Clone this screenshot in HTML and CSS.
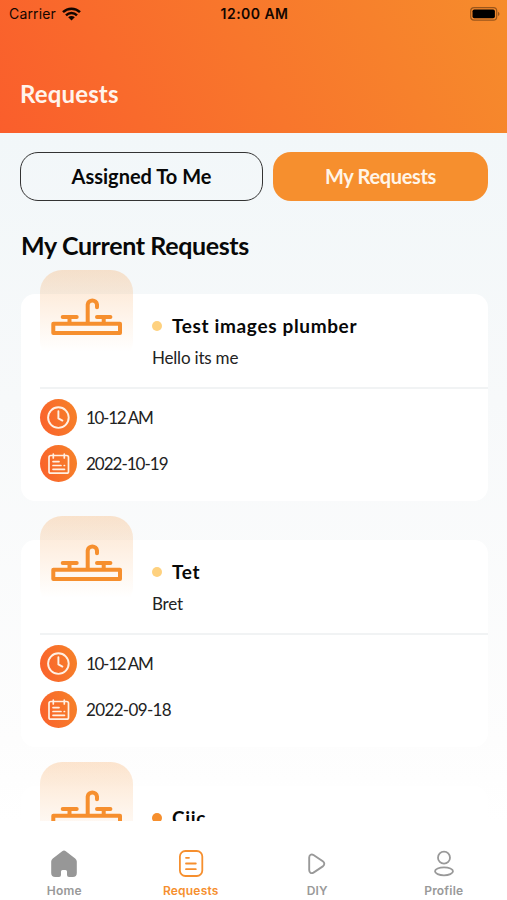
FILE: index.html
```html
<!DOCTYPE html>
<html lang="en">
	<head>
		<meta charset="UTF-8" />
		<meta name="viewport" content="width=device-width, initial-scale=1.0" />
		<title>Requests</title>
		<link rel="stylesheet" href="styles.css">
	</head>
	<body>
		<svg class="sprite" aria-hidden="true">
			<symbol id="sink" viewBox="0 0 93 93">
				<g fill="none" stroke="#f68f2e" stroke-width="4" stroke-linecap="round" stroke-linejoin="round">
					<rect x="13.3" y="53.7" width="66.7" height="9.4" />
					<path d="M47.7 53V34.5a4.7 4.7 0 0 1 9.3 0V37.2" />
					<path d="M22.7 47h14M29.5 47v6M57 47h13.4M63.7 47v6" />
				</g>
			</symbol>
			<symbol id="clock" viewBox="0 0 37 37">
				<g fill="none" stroke="#fff0e4" stroke-width="1.9" stroke-linecap="round" stroke-linejoin="round">
					<circle cx="18.4" cy="18.6" r="10.3" />
					<path d="M18.4 12.2v7.2l4 2.2" />
				</g>
			</symbol>
			<symbol id="calendar" viewBox="0 0 37 37">
				<g fill="none" stroke="#fff0e4" stroke-width="1.7" stroke-linecap="round" stroke-linejoin="round">
					<rect x="9" y="10.500" width="19.5" height="17.7" rx="1.8" />
					<path d="M13.3 9v4M24.3 9v4M13 16.6h6M13 20.5h8M24.2 20.5h.3M13 24.3h11.5" />
				</g>
			</symbol>
		</svg>

		<div class="screen">
			<header class="header">
				<div class="status">
					<div class="carrier">
						<span>Carrier</span>
						<svg width="19" height="14" viewBox="0 0 19 14">
							<g fill="none" stroke="#130600" stroke-width="2.5">
								<path d="M1 5.2a12.2 12.2 0 0 1 17 0" />
								<path d="M4 8.3a7.9 7.9 0 0 1 11 0" />
							</g>
							<path d="M9.5 13.6L6.2 10.3a4.7 4.7 0 0 1 6.6 0z" fill="#130600" />
						</svg>
					</div>
					<span class="time">12:00 AM</span>
					<svg class="battery" width="30" height="14" viewBox="0 0 30 14">
						<rect x="0.7" y="0.7" width="26" height="12.4" rx="3.4" fill="none" stroke="#9a561b" stroke-width="1.2" />
						<rect x="2.5" y="2.5" width="22.4" height="8.8" rx="1.8" fill="#000" />
						<path d="M28 4.7c2 .8 2 3.6 0 4.4z" fill="#9a561b" />
					</svg>
				</div>
				<h1 class="title">Requests</h1>
			</header>

			<main class="content">
				<div class="switch">
					<button class="switch-btn assigned">Assigned To Me</button>
					<button class="switch-btn mine">My Requests</button>
				</div>
				<h2 class="section-title">My Current Requests</h2>

				<section class="list">
					<article class="card">
						<div class="card-head">
							<div class="tile"><svg width="93" height="93"><use href="#sink" /></svg></div>
							<div class="info">
								<h3 class="name"><i class="dot"></i><span>Test images plumber</span></h3>
								<p class="desc">Hello its me</p>
							</div>
						</div>
						<div class="meta">
							<div class="row"><svg class="badge" viewBox="0 0 37 37"><use href="#clock" /></svg><span class="hours">10-12 AM</span></div>
							<div class="row"><svg class="badge" viewBox="0 0 37 37"><use href="#calendar" /></svg><span class="date">2022-10-19</span></div>
						</div>
					</article>

					<article class="card">
						<div class="card-head">
							<div class="tile"><svg width="93" height="93"><use href="#sink" /></svg></div>
							<div class="info">
								<h3 class="name"><i class="dot"></i><span>Tet</span></h3>
								<p class="desc">Bret</p>
							</div>
						</div>
						<div class="meta">
							<div class="row"><svg class="badge" viewBox="0 0 37 37"><use href="#clock" /></svg><span class="hours">10-12 AM</span></div>
							<div class="row"><svg class="badge" viewBox="0 0 37 37"><use href="#calendar" /></svg><span class="date wide">2022-09-18</span></div>
						</div>
					</article>

					<article class="card">
						<div class="card-head">
							<div class="tile"><svg width="93" height="93"><use href="#sink" /></svg></div>
							<div class="info">
								<h3 class="name"><i class="dot active"></i><span>Ciic</span></h3>
							</div>
						</div>
					</article>
				</section>
			</main>

			<nav class="tabs">
				<a class="tab">
					<svg width="28" height="28" viewBox="0 0 28 28">
						<path d="M12.2 1.2a3 3 0 0 1 3.6 0l9.4 7.2a4 4 0 0 1 1.6 3.2V23a4 4 0 0 1-4 4H19a2 2 0 0 1-2-2v-3.5a1.500 1.500 0 0 0-1.500-1.500h-3a1.500 1.500 0 0 0-1.500 1.500V25a2 2 0 0 1-2 2H5.2a4 4 0 0 1-4-4V11.6a4 4 0 0 1 1.6-3.2z" fill="#979797" />
					</svg>
					<span>Home</span>
				</a>
				<a class="tab current">
					<svg width="28" height="28" viewBox="0 0 28 28">
						<g fill="none" stroke="#f68f2e" stroke-width="1.8" stroke-linecap="round">
							<rect x="2.9" y="1" width="22.4" height="25" rx="5.5" />
							<path d="M9 7.8h3M9 13.5h9.8M9 19.2h9.8" />
						</g>
					</svg>
					<span>Requests</span>
				</a>
				<a class="tab">
					<svg width="28" height="28" viewBox="0 0 28 28">
						<path d="M6.2 7.5v12.6c0 2.7 2.2 3.7 4.3 2.5l9.3-6.2c2-1.4 2-3.7 0-5.1L10.5 5c-2.1-1.3-4.3-.2-4.3 2.5z" fill="none" stroke="#999" stroke-width="1.9" />
					</svg>
					<span>DIY</span>
				</a>
				<a class="tab">
					<svg width="28" height="28" viewBox="0 0 28 28">
						<g fill="none" stroke="#999" stroke-width="1.8">
							<circle cx="14" cy="7.7" r="6" />
							<ellipse cx="14" cy="21.3" rx="9" ry="4" />
						</g>
					</svg>
					<span>Profile</span>
				</a>
			</nav>
		</div>
	</body>
</html>
```

FILE: styles.css
```css
* { margin: 0; padding: 0; box-sizing: border-box; }
body {
	font-family: Lato, sans-serif;
	color: #080808;
	background: #fff;
}
.sprite {
	display: none;
}
.screen {
	display: flex;
	flex-direction: column;
	height: 900px;
	overflow: hidden;
	background: linear-gradient(#f2f7f9 133px, #f7f9fa 400px, #fdfdfd 740px, #fff 821px);
}
.header {
	height: 133px;
	flex: none;
	background: linear-gradient(62deg, #fa5e2c 0%, #f8762c 50%, #f68c2c 100%);
}
.status {
	display: grid;
	grid-template-columns: 1fr auto 1fr;
	align-items: center;
	height: 27px;
	padding: 0 7px 0 9px;
	font-family: Inter, sans-serif;
	font-size: 14px;
	color: #130600;
}
.carrier {
	display: flex;
	align-items: center;
	gap: 6px;
	letter-spacing: 0.15px;
}
.time {
	font-weight: 600;
	letter-spacing: 0.45px;
}
.battery {
	justify-self: end;
}
.title {
	margin: 51px 0 0 20px;
	font-size: 24px;
	line-height: 32px;
	font-weight: 700;
	letter-spacing: 0.15px;
	color: #fff4ec;
}
.content {
	flex: 1;
	min-height: 0;
	overflow: hidden;
	padding: 19px 19px 0 20px;
}
.switch {
	display: flex;
	gap: 10px;
}
.switch-btn {
	height: 49px;
	padding-bottom: 2px;
	border: none;
	border-radius: 18px;
	font-family: inherit;
	font-size: 20px;
	font-weight: 700;
}
.assigned {
	width: 243px;
	border: 1.5px solid #333;
	background: transparent;
	color: #080808;
}
.mine {
	flex: 1;
	background: #f68f2e;
	letter-spacing: -0.35px;
	color: #fff5e8;
}
.section-title {
	margin: 28px 0 33px 1px;
	font-size: 25px;
	line-height: 32px;
	font-weight: 700;
	letter-spacing: -0.37px;
}
.list {
	display: flex;
	flex-direction: column;
	gap: 39px;
	padding-left: 1px;
}
.card {
	height: 207px;
	flex: none;
	padding-left: 19px;
	border-radius: 14px;
	background: #fff;
}
.card-head {
	display: flex;
	gap: 19px;
	height: 95px;
	border-bottom: 2px solid #f1f3f4;
}
.tile {
	width: 93px;
	height: 93px;
	margin-top: -24px;
	border-radius: 22px;
	background: linear-gradient(rgba(246, 143, 46, 0.23), rgba(246, 143, 46, 0) 88%);
}
.tile svg {
	display: block;
}
.info {
	padding-top: 19px;
}
.name {
	display: flex;
	align-items: center;
	gap: 10px;
	font-size: 19px;
	line-height: 26px;
	font-weight: 700;
	letter-spacing: 0.65px;
}
.dot {
	width: 10px;
	height: 10px;
	border-radius: 50%;
	background: #fed17f;
}
.dot.active {
	background: #f68f2e;
}
.desc {
	margin-top: 7px;
	font-size: 17px;
	line-height: 24px;
	letter-spacing: -0.2px;
	color: #222;
}
.meta {
	display: flex;
	flex-direction: column;
	gap: 9px;
	padding-top: 10px;
}
.row {
	display: flex;
	align-items: center;
	gap: 9px;
	font-size: 17px;
	color: #222;
}
.hours {
	letter-spacing: -1.3px;
}
.date {
	letter-spacing: -1px;
}
.date.wide {
	letter-spacing: -0.65px;
}
.badge {
	width: 37px;
	height: 37px;
	border-radius: 50%;
	background: linear-gradient(75deg, #fa602c, #f68329);
}
.tabs {
	display: grid;
	grid-template-columns: repeat(4, 1fr);
	height: 79px;
	flex: none;
	padding: 29px 0 0 1px;
	background: #fff;
}
.tab {
	display: flex;
	flex-direction: column;
	align-items: center;
	gap: 5px;
	font-family: Inter, sans-serif;
	font-size: 12px;
	line-height: 16px;
	font-weight: 600;
	letter-spacing: 0.2px;
	color: #999;
}
.tab.current {
	color: #f68f2e;
}
```
